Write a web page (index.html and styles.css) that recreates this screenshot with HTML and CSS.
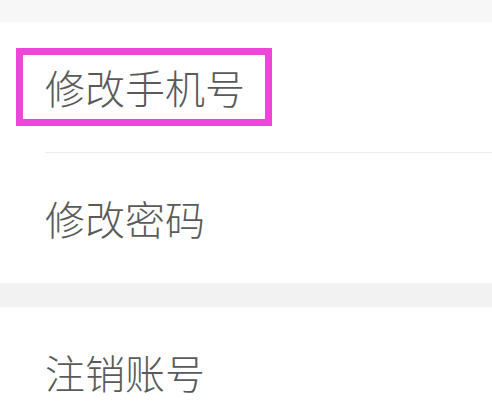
FILE: index.html
```html
<!DOCTYPE html>
<html lang="zh-CN">
<head>
    <meta charset="UTF-8">
    <meta name="viewport" content="width=device-width, initial-scale=1.0">
    <title>账号与安全</title>
    <link rel="stylesheet" href="styles.css">
</head>
<body>
    <div class="band band-top"></div>
    <div class="group">
        <div class="row">
            <span class="label highlight">修改手机号</span>
        </div>
        <div class="row">
            <span class="label">修改密码</span>
        </div>
    </div>
    <div class="band"></div>
    <div class="group">
        <div class="row">
            <span class="label">注销账号</span>
        </div>
    </div>
</body>
</html>
```

FILE: styles.css
```css
body {
    margin: 0;
    font-family: "Noto Sans CJK SC", "Noto Sans", sans-serif;
    background-color: #ffffff;
    color: #5a5a5a;
    overflow: hidden;
}
.band {
    height: 24px;
    background-color: #f2f2f2;
}
.band-top {
    height: 22px;
    background-color: #f7f7f7;
}
.group {
    background-color: #ffffff;
    padding-left: 45px;
}
.row {
    height: 130px;
    display: flex;
    align-items: center;
    border-bottom: 1px solid #ececec;
}
.row:last-child {
    border-bottom: none;
}
.label {
    font-size: 40px;
    line-height: 40px;
    font-weight: 300;
}
.highlight {
    display: inline-block;
    padding: 12px 20px 12px 22px;
    margin: -12px -20px -12px -22px;
    outline: 7px solid #ee46d6;
}
```
